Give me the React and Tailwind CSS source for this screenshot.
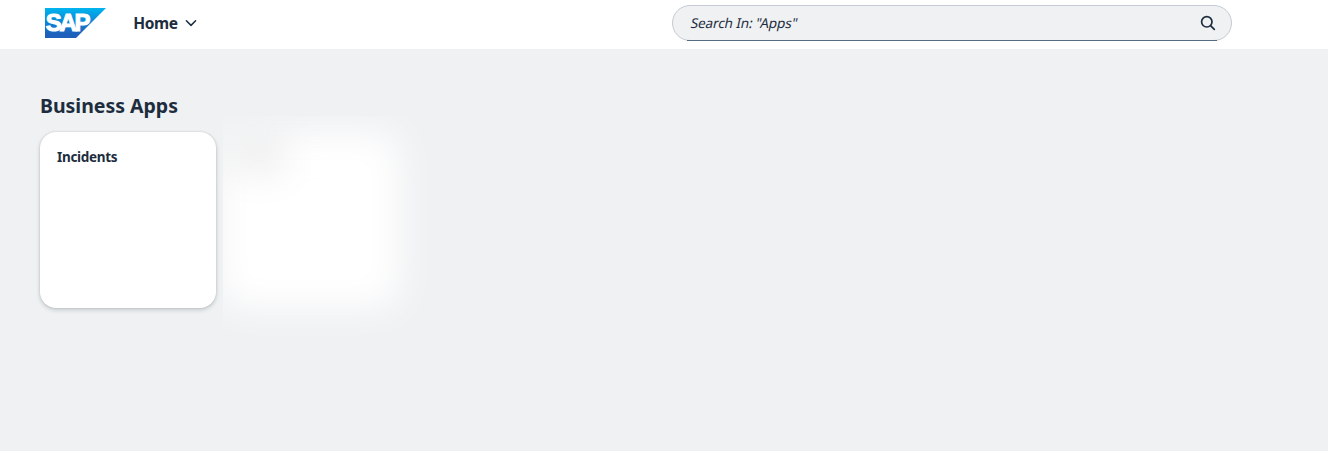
import React from "react";

function SapLogo() {
  return (
    <svg className="h-[30px] w-[61px] shrink-0" viewBox="0 0 61 30" role="img" aria-label="SAP">
      <defs>
        <linearGradient id="sap-blue" x1="0" y1="0" x2="0" y2="1">
          <stop offset="0" stopColor="#00b4ee" />
          <stop offset="0.45" stopColor="#0c88d6" />
          <stop offset="0.85" stopColor="#1d61bc" />
          <stop offset="1" stopColor="#1e5fbb" />
        </linearGradient>
      </defs>
      <path d="M0 0H61L31 30H0Z" fill="url(#sap-blue)" />
      <text x="0.8" y="23.3" fill="#fff" stroke="#fff" strokeWidth="1.1" fontFamily="'Liberation Sans', Arial, sans-serif" fontWeight="700" fontSize="24" letterSpacing="-2.3">SAP</text>
    </svg>
  );
}

function ShellBar() {
  return (
    <header className="flex h-[49px] items-start bg-white pl-[45px] pr-24">
      <div className="flex h-[46px] items-center">
        <SapLogo />
        <button className="ml-[27px] flex items-center text-[15.5px] leading-5 font-bold">
          <span className="w-[45px] whitespace-nowrap tracking-[-0.35px]">Home</span>
          <svg className="ml-[7px] h-3 w-3" viewBox="0 0 12 12" fill="none" stroke="currentColor" strokeWidth="1.5" strokeLinecap="round" strokeLinejoin="round">
            <path d="M1.4 3.8 6 8.4l4.6-4.6" />
          </svg>
        </button>
      </div>
      <div className="relative mt-[5px] ml-auto flex h-9 w-[560px] items-center justify-between rounded-full border border-[#c5cbd2] bg-[#eff1f2] pr-[15px] pl-[18px]">
        <span className="-skew-x-12 text-[13.5px] leading-5 tracking-[-0.1px]">Search In: "Apps"</span>
        <svg className="h-4 w-4" viewBox="0 0 16 16" fill="none" stroke="currentColor" strokeWidth="1.7" strokeLinecap="round">
          <circle cx="6.8" cy="6.8" r="5.2" />
          <path d="m10.8 10.8 3.5 3.5" />
        </svg>
        <span className="absolute right-[14px] -bottom-px left-[14px] h-px bg-[#556b82]" />
      </div>
    </header>
  );
}

export default function App() {
  return (
    <div className="flex h-[451px] flex-col overflow-hidden bg-[#eff1f2] font-['Noto_Sans',sans-serif] text-[#1d2d3e]">
      <ShellBar />
      <main className="flex-1 pt-11 pl-10">
        <h1 className="h-6 text-[19.5px] leading-[26px] font-bold tracking-[-0.02px]">Business Apps</h1>
        <div className="flex">
          <article className="mt-[15px] h-44 w-44 rounded-2xl bg-white px-[17px] pt-[15px] shadow-[0_0_2px_rgba(34,53,72,0.2),0_2px_4px_rgba(34,53,72,0.2)]">
            <h2 className="text-[13.5px] leading-5 font-bold tracking-[-0.3px]">Incidents</h2>
          </article>
          <div className="-mt-px ml-[7px] h-[230px] w-[230px] overflow-hidden">
            <div className="mt-4 -ml-1 h-44 w-[181px] rounded-2xl bg-white px-4 pt-[17px] blur-[19px]">
              <div className="h-4 w-12 rounded bg-[#d6d8d8]" />
            </div>
          </div>
        </div>
      </main>
    </div>
  );
}
